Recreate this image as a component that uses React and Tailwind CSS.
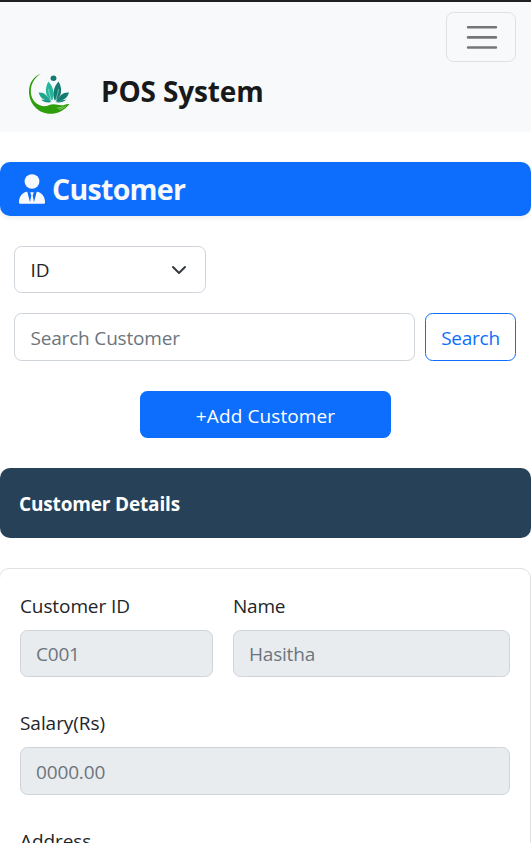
function PersonIcon() {
  return (
    <svg className="h-[30px] w-[26px] shrink-0" viewBox="0 0 26 30" fill="currentColor" aria-hidden="true">
      <ellipse cx="13" cy="7.500" rx="7.400" ry="7.300" />
      <path d="M8.300 17.700 11 28.300 12.300 21.500 11.200 18.300H14.800L13.700 21.500 15 28.300 17.700 17.700C22.500 18.200 26 22.500 26 27.800V28.800Q26 29.800 25 29.800H1Q0 29.800 0 28.800V27.800C0 22.500 3.500 18.200 8.300 17.700Z" />
    </svg>
  );
}

function Logo() {
  return (
    <svg className="mt-[4px] h-[44px] w-[44px] shrink-0" viewBox="0 0 44 44" aria-hidden="true">
      <path
        d="M13 1.500C5 4.500 1 11.500 1 19.500c0 12.500 9.500 22.300 21.500 22.300 7 0 11.500-2.300 16.500-7 1.800-1.700 2.800-3 1.500-2.900-2.500.2-5 1.300-7 1.300-3 0-5-1-8-1-3.800 0-5.500 2-9.500 2C8.500 33.500 3 28 2.800 19.500 2.800 12 6.500 5.500 13 1.500Z"
        fill="#2f9e0b"
      />
      <path d="M29 36c3 0 4.500-.6 6.500-2M31 37.400c3-.5 5-1.600 7-3.600" stroke="#d9f0d0" strokeWidth=".5" fill="none" />
      <ellipse cx="25.500" cy="6.300" rx="2.900" ry="2.700" fill="#147b72" />
      <path d="M24.300 28.500C16.500 25 16.500 16 20.500 9.500c4.500 5 6.500 12 3.800 19Z" fill="#25b79a" />
      <path d="M26.700 28.500c7.800-3.500 7.800-12.500 3.800-19C26 14.500 24 21.500 26.700 28.500Z" fill="#147b72" />
      <path d="M23 29c-6.500.5-10.500-2.500-12.300-8.500 3-.2 5.300.5 7.300 2.500 1.800 1.700 3.500 3.700 5 6Z" fill="#20a58e" />
      <path d="M28 29c6.500.5 11.200-2.500 13-8.500-3-.2-6 .5-8 2.500-1.800 1.700-3.500 3.700-5 6Z" fill="#147b72" />
      <path d="M24 30c-3.500 1-8.500.5-11-2.500 3.500.6 7.800.8 11 2.500ZM27 30c3.500 1 9 .5 11.500-2.500-3.500.6-8.300.8-11.500 2.500Z" fill="#1b8e80" />
      <path d="M20.500 17c.4 4 1.300 7 2.800 10.500M30.500 17c-.4 4-1.300 7-2.800 10.500" stroke="#d5efea" strokeWidth=".5" fill="none" />
    </svg>
  );
}

function Field({ label, value, labelClass = "", valueClass = "", boxClass = "h-[48px]", className = "" }) {
  return (
    <div className={className}>
      <label className="block h-[30px] leading-[30px]">
        <span className={labelClass}>{label}</span>
      </label>
      <div
        className={`mt-[9px] flex items-center rounded-[7.500px] border border-[#ced4da] bg-[#e9ecef] pt-px pl-[15px] text-[#6c757d] ${boxClass}`}
      >
        <span className={valueClass}>{value}</span>
      </div>
    </div>
  );
}

export default function App() {
  return (
    <div className="h-[843px] w-full overflow-hidden bg-white font-['Open_Sans','Noto_Sans',sans-serif] text-[19px] text-[#212529]">
      <nav className="h-[132px] border-t-2 border-[#212124] bg-[#f8f9fa] pt-[10px]">
        <div className="flex justify-end pr-[15px]">
          <button className="flex h-[50px] w-[70px] items-center justify-center rounded-[7.500px] border border-[#dfe0e1]">
            <svg className="ml-px h-[38px] w-[38px]" viewBox="0 0 30 30" fill="none" aria-label="Menu">
              <path d="M4 7.300h22M4 15.300h22M4 23.300h22" stroke="#747575" strokeLinecap="round" strokeWidth="2" />
            </svg>
          </button>
        </div>
        <div className="flex h-[60px] items-center pl-[28px]">
          <Logo />
          <span className="-mt-[3px] ml-[29px] text-[28px] leading-none font-bold tracking-[-0.15px] text-[#17191b]">
            POS System
          </span>
        </div>
      </nav>

      <h1 className="mt-[30px] flex h-[54px] items-center rounded-[10px] bg-[#0d6efd] pl-[19px] text-[29px] font-bold text-[#f8f9fa] shadow-[0_2px_5px_rgba(0,0,0,0.08)]">
        <PersonIcon />
        <span className="ml-[7px] pt-px text-[28.500px] tracking-[-0.7px]">Customer</span>
      </h1>

      <div className="mx-[14px] mt-[30px] flex h-[47px] w-[192px] items-center justify-between rounded-[7.500px] border border-[#ced4da] pr-[18px] pl-[15.500px]">
        <span className="pt-[2px]">ID</span>
        <svg className="h-[16px] w-[16px]" viewBox="0 0 16 16" fill="none" aria-hidden="true">
          <path d="m2 5 6 6 6-6" stroke="#343a40" strokeWidth="2" strokeLinecap="round" strokeLinejoin="round" />
        </svg>
      </div>

      <div className="mt-[20px] flex h-[48px] gap-[10px] pr-[15px] pl-[14px]">
        <div className="flex flex-1 items-center rounded-[7.500px] border border-[#ced4da] pt-[2px] pl-[15.500px] text-[#6c757d]">
          <span className="tracking-[-0.18px]">Search Customer</span>
        </div>
        <button className="flex w-[91px] items-center justify-center rounded-[7.500px] border border-[#0d6efd] pt-[2px] text-[#0d6efd]">
          <span className="tracking-[-0.25px]">Search</span>
        </button>
      </div>

      <button className="mx-auto mt-[30px] flex h-[47px] w-[251px] items-center justify-center rounded-[7.500px] bg-[#0d6efd] pt-[3px] text-white">
        <span className="tracking-[0.1px]">+Add Customer</span>
      </button>

      <h2 className="mt-[30px] flex h-[70px] items-center rounded-[10px] bg-[#264158] pt-[2px] pl-[19px] font-bold text-white">
        <span className="tracking-[-0.16px]">Customer Details</span>
      </h2>

      <section className="-ml-px mt-[30px] h-[400px] rounded-[10px] border border-[#dfe1e4] pt-[22px] pr-[20px] pl-[20px]">
        <div className="flex gap-[20px]">
          <Field label="Customer ID" value="C001" labelClass="tracking-[-0.1px]" valueClass="tracking-[-0.2px]" boxClass="h-[47px]" className="w-[193px]" />
          <Field label="Name" value="Hasitha" labelClass="tracking-[-0.2px]" valueClass="tracking-[-0.2px]" boxClass="h-[47px]" className="flex-1" />
        </div>
        <Field label="Salary(Rs)" value="0000.00" labelClass="tracking-[-0.05px]" valueClass="pt-px tracking-[-0.15px]" className="mt-[31px]" />
        <Field label="Address" value="" className="mt-[31px]" labelClass="tracking-[-0.1px]" />
      </section>
    </div>
  );
}
